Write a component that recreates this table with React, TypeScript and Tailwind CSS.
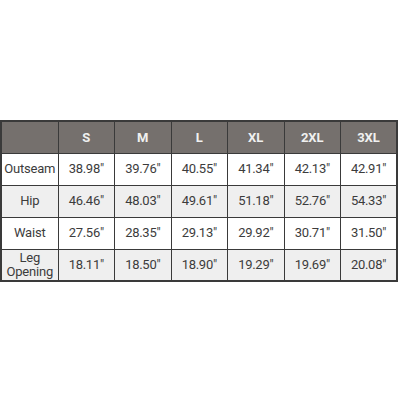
import React from "react";

const sizes = ["S", "M", "L", "XL", "2XL", "3XL"];
const rows: { label: React.ReactNode; vals: string[] }[] = [
  { label: "Outseam", vals: ["38.98\"", "39.76\"", "40.55\"", "41.34\"", "42.13\"", "42.91\""] },
  { label: "Hip", vals: ["46.46\"", "48.03\"", "49.61\"", "51.18\"", "52.76\"", "54.33\""] },
  { label: "Waist", vals: ["27.56\"", "28.35\"", "29.13\"", "29.92\"", "30.71\"", "31.50\""] },
  { label: <span className="block leading-[14px]">Leg<br />Opening</span>, vals: ["18.11\"", "18.50\"", "18.90\"", "19.29\"", "19.69\"", "20.08\""] },
];

export default function App() {
  return (
    <div className="w-[400px] h-[400px] bg-white pt-[120px]" style={{ fontFamily: "Roboto, 'Liberation Sans', sans-serif" }}>
      <table className="w-[398px] table-fixed border-collapse border-2 border-[#3a3a3a]">
        <thead>
          <tr className="h-[32px] bg-[#75706d]">
            <th className="border border-[#3a3a3a] w-[57px]"></th>
            {sizes.map((s) => (
              <th key={s} className="border border-[#3a3a3a] text-[13px] font-bold text-[#f0f0f0] text-center">
                {s}
              </th>
            ))}
          </tr>
        </thead>
        <tbody>
          {rows.map((r, i) => (
            <tr key={i} className={`h-[32px] ${i % 2 === 1 ? "bg-[#efefef]" : "bg-white"}`}>
              <td className="border border-[#3a3a3a] text-center text-[13px] text-[#3c3c3c] tracking-[-0.2px] p-0">{r.label}</td>
              {r.vals.map((v, j) => (
                <td key={j} className="border border-[#3a3a3a] text-center text-[13px] text-[#3c3c3c] tracking-[-0.3px] p-0">
                  {v}
                </td>
              ))}
            </tr>
          ))}
        </tbody>
      </table>
    </div>
  );
}
